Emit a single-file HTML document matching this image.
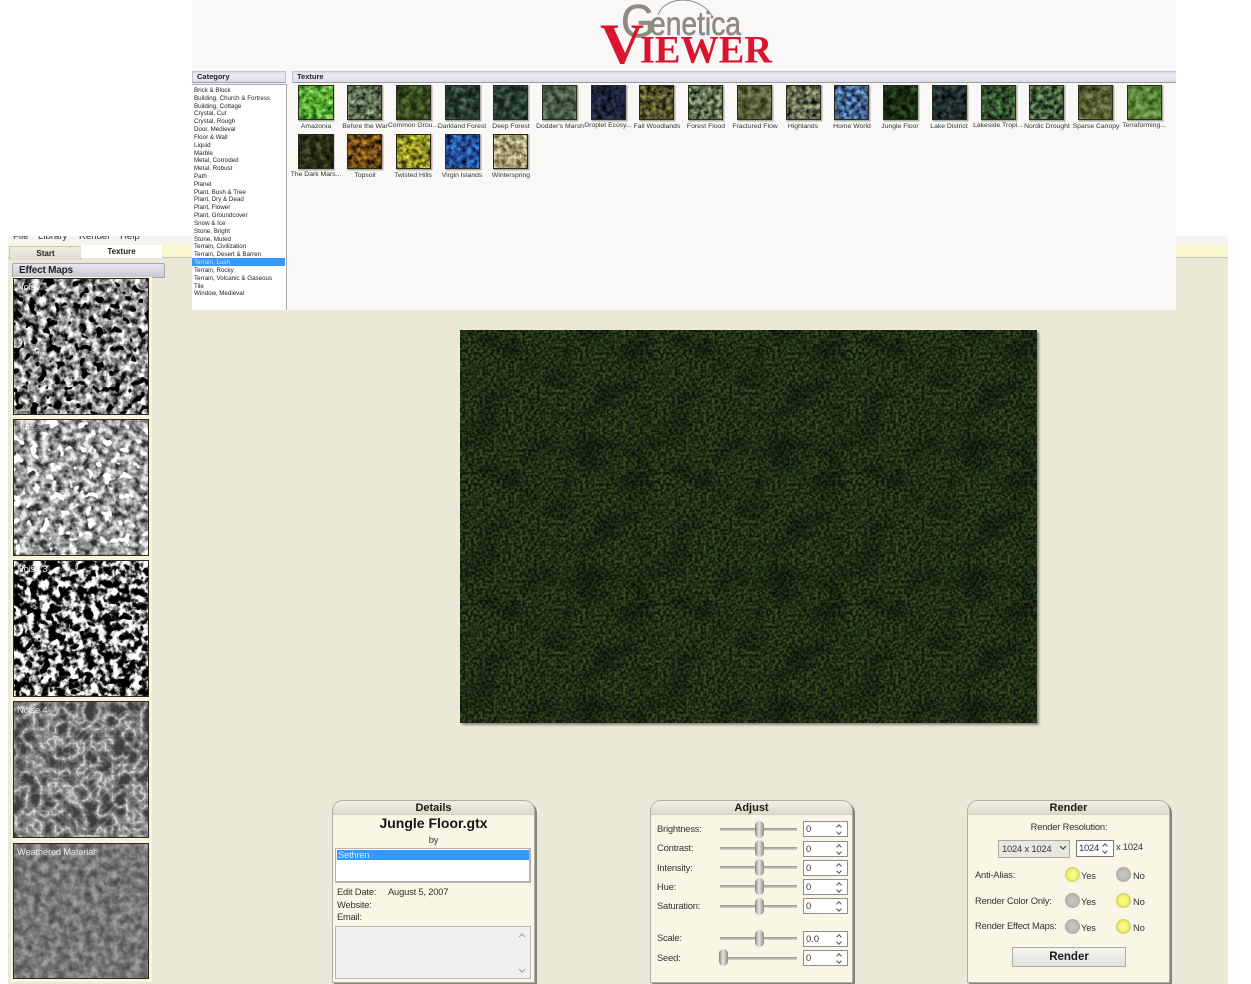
<!DOCTYPE html>
<html><head><meta charset="utf-8"><title>Genetica Viewer</title>
<style>
html,body{margin:0;padding:0;background:#fff}
body{position:relative;width:1251px;height:984px;overflow:hidden;font-family:"Liberation Sans",sans-serif;color:#222}
.a{position:absolute}
.t{position:absolute;white-space:nowrap}
.c{position:absolute;white-space:nowrap;text-align:center}
.cat{position:absolute;left:194px;font-size:6.8px;line-height:8px;height:8px;white-space:nowrap;color:#222;transform:scaleX(.915);transform-origin:0 0}
.lab{position:absolute;font-size:6.8px;line-height:8px;width:60px;text-align:center;white-space:nowrap;color:#333}
.hd{position:absolute;height:10px;background:linear-gradient(#d8d8e6,#eeeef4 30%,#dcdce8);border:1px solid #c4c4d0;border-bottom-color:#9c9ca6;font:bold 7.5px/10px "Liberation Sans",sans-serif;color:#222;padding-left:4px;box-sizing:content-box}
.panel{position:absolute;top:800px;width:201px;height:181px;background:#f9f6e5;border:1px solid #b0aea4;border-radius:11px 11px 0 0;box-shadow:2px 2px 0 #85847c}
.phd{position:absolute;left:0;right:0;top:0;height:13px;border-radius:10px 10px 0 0;background:linear-gradient(#f2f0e4,#dcd9c8);border-bottom:1px solid #d5d2c0;text-align:center;font:bold 11px/14px "Liberation Sans",sans-serif;color:#1a1a1a}
.s{position:absolute;font-size:9.4px;letter-spacing:-.2px;line-height:12px;white-space:nowrap;color:#333}
.track{position:absolute;left:720px;width:77px;height:3px;background:linear-gradient(#98968a,#d8d6c8)}
.thumb{position:absolute;width:9px;height:17px;border-radius:5px;background:linear-gradient(90deg,#858580,#e6e6e6 45%,#8a8a86)}
.spin{position:absolute;left:803px;width:43px;height:14px;background:#fff;border:1px solid #8f8f8f;font-size:9.4px;line-height:14px;color:#333;text-indent:2px}
.spin:after,.spin2:after{content:"";position:absolute;right:6px;top:3px;width:3px;height:3px;border-left:1px solid #555;border-top:1px solid #555;transform:rotate(45deg)}
.spin:before,.spin2:before{content:"";position:absolute;right:6px;top:8px;width:3px;height:3px;border-right:1px solid #555;border-bottom:1px solid #555;transform:rotate(45deg)}
.led{position:absolute;width:15px;height:15px;border-radius:50%;background:radial-gradient(circle at 50% 50%,#c9c9c4 0,#bcbcb6 50%,#8e8e86 100%)}
.on{background:radial-gradient(circle at 50% 50%,#fbfb90 0,#f3f370 45%,#9c9c58 100%)}
.noise{position:absolute;left:13px;width:136px;height:137px;outline:1px solid #2c2c20;outline-offset:-1px}
.nl{position:absolute;left:17px;font-size:9.4px;letter-spacing:-.2px;line-height:12px;color:#e8e8e8;white-space:nowrap}
svg{display:block}
</style></head><body>

<svg width="0" height="0" style="position:absolute">
<defs>
<filter id="n1" x="0" y="0" width="1" height="1" color-interpolation-filters="sRGB"><feTurbulence type="fractalNoise" baseFrequency=".15" numOctaves="4" seed="4"/><feColorMatrix values="2.4 0 0 0 -.7 2.4 0 0 0 -.7 2.4 0 0 0 -.7 0 0 0 0 1"/><feComponentTransfer result="a"><feFuncR type="table" tableValues=".1 .38 .58 .8 1"/><feFuncG type="table" tableValues=".1 .38 .58 .8 1"/><feFuncB type="table" tableValues=".1 .38 .58 .8 1"/></feComponentTransfer><feTurbulence type="fractalNoise" baseFrequency=".12" numOctaves="2" seed="12"/><feColorMatrix values="14 0 0 0 -4.8 14 0 0 0 -4.8 14 0 0 0 -4.8 0 0 0 0 1"/><feBlend in2="a" mode="multiply"/></filter>
<filter id="n2" x="0" y="0" width="1" height="1" color-interpolation-filters="sRGB"><feTurbulence type="fractalNoise" baseFrequency=".14" numOctaves="4" seed="6"/><feColorMatrix values="2.4 0 0 0 -.7 2.4 0 0 0 -.7 2.4 0 0 0 -.7 0 0 0 0 1"/><feComponentTransfer result="a"><feFuncR type="table" tableValues=".18 .42 .58 .74 .92"/><feFuncG type="table" tableValues=".18 .42 .58 .74 .92"/><feFuncB type="table" tableValues=".18 .42 .58 .74 .92"/></feComponentTransfer><feTurbulence type="fractalNoise" baseFrequency=".11" numOctaves="2" seed="12"/><feColorMatrix values="-14 0 0 0 5.6 -14 0 0 0 5.6 -14 0 0 0 5.6 0 0 0 0 1"/><feBlend in2="a" mode="screen"/></filter>
<filter id="n3" x="0" y="0" width="1" height="1" color-interpolation-filters="sRGB"><feTurbulence type="fractalNoise" baseFrequency=".14" numOctaves="4" seed="4"/><feColorMatrix values="3.4 0 0 0 -1.2 3.4 0 0 0 -1.2 3.4 0 0 0 -1.2 0 0 0 0 1"/><feComponentTransfer result="a"><feFuncR type="table" tableValues="0 .2 .55 .9 1"/><feFuncG type="table" tableValues="0 .2 .55 .9 1"/><feFuncB type="table" tableValues="0 .2 .55 .9 1"/></feComponentTransfer><feTurbulence type="fractalNoise" baseFrequency=".11" numOctaves="2" seed="12"/><feColorMatrix values="14 0 0 0 -5 14 0 0 0 -5 14 0 0 0 -5 0 0 0 0 1"/><feBlend in2="a" mode="multiply"/></filter>
<filter id="n4" x="0" y="0" width="1" height="1" color-interpolation-filters="sRGB"><feTurbulence type="turbulence" baseFrequency=".07" numOctaves="5" seed="7"/><feColorMatrix values="-2 0 0 0 1.05 -2 0 0 0 1.05 -2 0 0 0 1.05 0 0 0 0 1"/><feComponentTransfer><feFuncR type="table" tableValues=".25 .42 .6 .95"/><feFuncG type="table" tableValues=".25 .42 .6 .95"/><feFuncB type="table" tableValues=".25 .42 .6 .95"/></feComponentTransfer></filter>
<filter id="n5" x="0" y="0" width="1" height="1" color-interpolation-filters="sRGB"><feTurbulence type="fractalNoise" baseFrequency=".14" numOctaves="3" seed="4"/><feColorMatrix values="1.8 0 0 0 -.4 1.8 0 0 0 -.4 1.8 0 0 0 -.4 0 0 0 0 1"/><feComponentTransfer result="a"><feFuncR type="table" tableValues=".36 .44 .54 .64"/><feFuncG type="table" tableValues=".36 .44 .54 .64"/><feFuncB type="table" tableValues=".36 .44 .54 .64"/></feComponentTransfer><feTurbulence type="fractalNoise" baseFrequency=".11" numOctaves="2" seed="12"/><feColorMatrix values="5 0 0 0 -1.5 5 0 0 0 -1.5 5 0 0 0 -1.5 0 0 0 0 1"/><feComponentTransfer result="b"><feFuncR type="table" tableValues=".8 1"/><feFuncG type="table" tableValues=".8 1"/><feFuncB type="table" tableValues=".8 1"/></feComponentTransfer><feBlend in="b" in2="a" mode="multiply"/></filter>
<filter id="main" x="0" y="0" width="1" height="1" color-interpolation-filters="sRGB"><feTurbulence type="fractalNoise" baseFrequency=".35" numOctaves="3" seed="9" stitchTiles="stitch"/><feColorMatrix values="3 0 0 0 -1 3 0 0 0 -1 3 0 0 0 -1 0 0 0 0 1"/><feComponentTransfer result="a"><feFuncR type="table" tableValues=".06 .09 .125 .16 .22"/><feFuncG type="table" tableValues=".09 .14 .19 .24 .31"/><feFuncB type="table" tableValues=".04 .07 .09 .11 .14"/></feComponentTransfer><feTurbulence type="fractalNoise" baseFrequency=".026 .038" numOctaves="3" seed="3" stitchTiles="stitch"/><feColorMatrix values="1 0 0 0 .45 1 0 0 0 .45 1 0 0 0 .45 0 0 0 0 1"/><feBlend in2="a" mode="multiply"/></filter>
<filter id="g1" x="0" y="0" width="1" height="1" color-interpolation-filters="sRGB"><feTurbulence type="fractalNoise" baseFrequency=".16" numOctaves="3" seed="5"/><feColorMatrix values="1.4 0 0 0 -.2 1.4 0 0 0 -.2 1.4 0 0 0 -.2 0 0 0 0 1"/><feBlend in2="SourceGraphic" mode="soft-light"/></filter>
<filter id="g2" x="0" y="0" width="1" height="1" color-interpolation-filters="sRGB"><feTurbulence type="fractalNoise" baseFrequency=".2" numOctaves="3" seed="8"/><feColorMatrix values="1.5 0 0 0 -.25 1.5 0 0 0 -.25 1.5 0 0 0 -.25 0 0 0 0 1"/><feBlend in2="SourceGraphic" mode="overlay"/></filter>
</defs>
</svg>

<div class="a" style="left:8px;top:236px;width:1220px;height:8px;background:#f4f5f3;overflow:hidden">
<span class="t" style="left:5px;top:-5px;font-size:9.6px;line-height:12px;color:#333">File</span>
<span class="t" style="left:30px;top:-5px;font-size:9.6px;line-height:12px;color:#333">Library</span>
<span class="t" style="left:71px;top:-5px;font-size:9.6px;line-height:12px;color:#333">Render</span>
<span class="t" style="left:112px;top:-5px;font-size:9.6px;line-height:12px;color:#333">Help</span>
</div>
<div class="a" style="left:8px;top:244px;width:1220px;height:13px;background:#f9f8cf"></div>
<div class="a" style="left:8px;top:257px;width:1220px;height:727px;background:#ebe8d8;border-top:1px solid #c9c8ac;box-sizing:border-box"></div>
<div class="a" style="left:9px;top:246px;width:71px;height:13px;background:linear-gradient(#f0eee6,#dedcd0);border:1px solid #c8c6ba;border-bottom:0;font:bold 8px/14px 'Liberation Sans',sans-serif;text-align:center;color:#222">Start</div>
<div class="a" style="left:81px;top:245px;width:81px;height:13px;background:#fff;font:bold 8px/13px 'Liberation Sans',sans-serif;text-align:center;color:#222">Texture</div>
<div class="a" style="left:12px;top:263px;width:151px;height:13px;background:linear-gradient(#e6e6ee,#c8c8d4);border:1px solid #a6a6ae;border-radius:2px 2px 0 0;font:bold 10px/13px 'Liberation Sans',sans-serif;text-indent:6px;letter-spacing:-.2px;color:#222">Effect Maps</div>

<div class="a" style="left:11px;top:277px;width:141px;height:705px;background:#f8f5dd"></div>
<svg class="noise" style="top:278px" width="136" height="137"><rect width="136" height="137" filter="url(#n1)"/></svg>
<svg class="noise" style="top:419px" width="136" height="137"><rect width="136" height="137" filter="url(#n2)"/></svg>
<svg class="noise" style="top:560px" width="136" height="137"><rect width="136" height="137" filter="url(#n3)"/></svg>
<svg class="noise" style="top:701px" width="136" height="137"><rect width="136" height="137" filter="url(#n4)"/></svg>
<svg class="noise" style="top:843px;height:136px" width="136" height="136"><rect width="136" height="136" filter="url(#n5)"/></svg>
<div class="nl" style="top:281px">Noise</div>
<div class="nl" style="top:422px;color:#999">Noise 2</div>
<div class="nl" style="top:563px">Noise 3</div>
<div class="nl" style="top:704px">Noise 4</div>
<div class="nl" style="top:846px">Weathered Material</div>

<svg class="a" style="left:460px;top:330px;box-shadow:2px 2px 2px #8a897c" width="577" height="393">
<defs><rect id="tile" width="192.4" height="131" filter="url(#main)"/></defs>
<use href="#tile" x="0" y="0"/><use href="#tile" x="192.3" y="0"/><use href="#tile" x="384.6" y="0"/>
<use href="#tile" x="0" y="131"/><use href="#tile" x="192.3" y="131"/><use href="#tile" x="384.6" y="131"/>
<use href="#tile" x="0" y="262"/><use href="#tile" x="192.3" y="262"/><use href="#tile" x="384.6" y="262"/>
</svg>

<div class="a" style="left:192px;top:0;width:984px;height:310px;background:#faf8f6"></div>
<svg class="a" style="left:590px;top:0" width="195" height="70">
<path d="M68 15C75 -5 110 -5 122 16" fill="none" stroke="#8d8a84" stroke-width="1"/>
<circle cx="122" cy="17" r="1.5" fill="#8d8a84"/>
<text x="31" y="37" font-family="Liberation Sans" font-size="46" fill="#8d8a84" stroke="#8d8a84" stroke-width=".5" textLength="34" lengthAdjust="spacingAndGlyphs">G</text>
<text x="60" y="35" font-family="Liberation Sans" font-size="33" fill="#8d8a84" stroke="#8d8a84" stroke-width=".6" textLength="91" lengthAdjust="spacingAndGlyphs">enetica</text>
<text x="10" y="63" font-family="Liberation Serif" font-weight="bold" font-size="57" fill="#d8142e" textLength="44" lengthAdjust="spacingAndGlyphs">V</text>
<text x="50" y="62.500" font-family="Liberation Serif" font-weight="bold" font-size="39" fill="#d8142e" textLength="132" lengthAdjust="spacingAndGlyphs">IEWER</text>
</svg>

<div class="hd" style="left:192px;top:71px;width:88px">Category</div>
<div class="hd" style="left:292px;top:71px;width:879px;border-right:0">Texture</div>

<div class="a" style="left:192px;top:84px;width:95px;height:226px;background:#fff;border-top:1px solid #aaa;border-right:1px solid #aaa;box-sizing:border-box"></div>
<div class="a" style="left:192px;top:258px;width:93px;height:8px;background:#3399ff"></div>
<div class="cat" style="top:87px">Brick &amp; Block</div>
<div class="cat" style="top:95px">Building, Church &amp; Fortress</div>
<div class="cat" style="top:102.6px">Building, Cottage</div>
<div class="cat" style="top:110.4px">Crystal, Cut</div>
<div class="cat" style="top:118.2px">Crystal, Rough</div>
<div class="cat" style="top:126px">Door, Medieval</div>
<div class="cat" style="top:133.8px">Floor &amp; Wall</div>
<div class="cat" style="top:141.7px">Liquid</div>
<div class="cat" style="top:149.5px">Marble</div>
<div class="cat" style="top:157.3px">Metal, Corroded</div>
<div class="cat" style="top:165.1px">Metal, Robust</div>
<div class="cat" style="top:173px">Path</div>
<div class="cat" style="top:180.8px">Planet</div>
<div class="cat" style="top:188.6px">Plant, Bush &amp; Tree</div>
<div class="cat" style="top:196.4px">Plant, Dry &amp; Dead</div>
<div class="cat" style="top:204.2px">Plant, Flower</div>
<div class="cat" style="top:212px">Plant, Groundcover</div>
<div class="cat" style="top:220px">Snow &amp; Ice</div>
<div class="cat" style="top:227.8px">Stone, Bright</div>
<div class="cat" style="top:235.6px">Stone, Muted</div>
<div class="cat" style="top:243.4px">Terrain, Civilization</div>
<div class="cat" style="top:251.2px">Terrain, Desert &amp; Barren</div>
<div class="cat" style="top:259px;color:#cfe6ff">Terrain, Lush</div>
<div class="cat" style="top:266.9px">Terrain, Rocky</div>
<div class="cat" style="top:274.7px">Terrain, Volcanic &amp; Gaseous</div>
<div class="cat" style="top:282.5px">Tile</div>
<div class="cat" style="top:290.3px">Window, Medieval</div>

<svg class="a" style="left:292px;top:80px" width="884" height="100">
<path d="M7 6h35v35h-35zM56 6h35v35h-35zM105 6h35v35h-35zM154 6h35v35h-35zM202 6h35v35h-35zM251 6h35v35h-35zM300 6h35v35h-35zM348 6h35v35h-35zM397 6h35v35h-35zM446 6h35v35h-35zM495 6h35v35h-35zM543 6h35v35h-35zM592 6h35v35h-35zM641 6h35v35h-35zM690 6h35v35h-35zM738 6h35v35h-35zM787 6h35v35h-35zM836 6h35v35h-35zM7 55h35v35h-35zM56 55h35v35h-35zM105 55h35v35h-35zM154 55h35v35h-35zM202 55h35v35h-35z" fill="#b0aea6" stroke="#b0aea6"/>
<rect x="6" y="5" width="36" height="35" fill="#5aa838" filter="url(#g2)"/>
<rect x="55" y="5" width="35" height="35" fill="#5a6a50" filter="url(#g2)"/>
<rect x="104" y="5" width="35" height="35" fill="#32481a" filter="url(#g1)"/>
<rect x="153" y="5" width="35" height="35" fill="#24382e" filter="url(#g1)"/>
<rect x="201" y="5" width="35" height="35" fill="#24382e" filter="url(#g1)"/>
<rect x="250" y="5" width="35" height="35" fill="#465a42" filter="url(#g1)"/>
<rect x="299" y="5" width="35" height="35" fill="#1c2238" filter="url(#g2)"/>
<rect x="347" y="5" width="35" height="35" fill="#52502a" filter="url(#g2)"/>
<rect x="396" y="5" width="35" height="35" fill="#5e6e52" filter="url(#g2)"/>
<rect x="445" y="5" width="35" height="35" fill="#565c36" filter="url(#g1)"/>
<rect x="494" y="5" width="35" height="35" fill="#60684e" filter="url(#g2)"/>
<rect x="542" y="5" width="35" height="35" fill="#40608a" filter="url(#g2)"/>
<rect x="591" y="5" width="35" height="35" fill="#14280f" filter="url(#g1)"/>
<rect x="640" y="5" width="35" height="35" fill="#1e2c2c" filter="url(#g2)"/>
<rect x="689" y="5" width="35" height="35" fill="#32502e" filter="url(#g2)"/>
<rect x="737" y="5" width="35" height="35" fill="#405a3a" filter="url(#g2)"/>
<rect x="786" y="5" width="35" height="35" fill="#585e30" filter="url(#g1)"/>
<rect x="835" y="5" width="35" height="35" fill="#5c8838" filter="url(#g1)"/>
<rect x="6" y="54" width="36" height="35" fill="#262c16" filter="url(#g1)"/>
<rect x="55" y="54" width="35" height="35" fill="#6e4a14" filter="url(#g2)"/>
<rect x="104" y="54" width="35" height="35" fill="#8c8c22" filter="url(#g2)"/>
<rect x="153" y="54" width="35" height="35" fill="#24509a" filter="url(#g2)"/>
<rect x="201" y="54" width="35" height="35" fill="#a09a6e" filter="url(#g2)"/>
<path d="M6.500 5.500h35v34h-35zM55.500 5.500h34v34h-34zM104.500 5.500h34v34h-34zM153.500 5.500h34v34h-34zM201.500 5.500h34v34h-34zM250.500 5.500h34v34h-34zM299.500 5.500h34v34h-34zM347.500 5.500h34v34h-34zM396.500 5.500h34v34h-34zM445.500 5.500h34v34h-34zM494.500 5.500h34v34h-34zM542.500 5.500h34v34h-34zM591.500 5.500h34v34h-34zM640.500 5.500h34v34h-34zM689.500 5.500h34v34h-34zM737.500 5.500h34v34h-34zM786.500 5.500h34v34h-34zM835.500 5.500h34v34h-34zM6.500 54.500h35v34h-35zM55.500 54.500h34v34h-34zM104.500 54.500h34v34h-34zM153.500 54.500h34v34h-34zM201.500 54.500h34v34h-34z" fill="none" stroke="#2a2a1c" stroke-width="1"/>
</svg>
<div class="lab" style="left:286px;top:123px">Amazonia</div>
<div class="lab" style="left:335px;top:123px">Before the War</div>
<div class="lab" style="left:383px;top:122px">Common Grou...</div>
<div class="lab" style="left:432px;top:123px">Darkland Forest</div>
<div class="lab" style="left:481px;top:123px">Deep Forest</div>
<div class="lab" style="left:530px;top:123px">Dodder's Marsh</div>
<div class="lab" style="left:578px;top:122px">Droplet Ecosy...</div>
<div class="lab" style="left:627px;top:123px">Fall Woodlands</div>
<div class="lab" style="left:676px;top:123px">Forest Flood</div>
<div class="lab" style="left:725px;top:123px">Fractured Flow</div>
<div class="lab" style="left:773px;top:123px">Highlands</div>
<div class="lab" style="left:822px;top:123px">Home World</div>
<div class="lab" style="left:870px;top:123px">Jungle Floor</div>
<div class="lab" style="left:919px;top:123px">Lake District</div>
<div class="lab" style="left:968px;top:122px">Lakeside Tropi...</div>
<div class="lab" style="left:1017px;top:123px">Nordic Drought</div>
<div class="lab" style="left:1066px;top:123px">Sparse Canopy</div>
<div class="lab" style="left:1114px;top:122px">Terraforming...</div>
<div class="lab" style="left:286px;top:171px">The Dark Mars...</div>
<div class="lab" style="left:335px;top:172px">Topsoil</div>
<div class="lab" style="left:383px;top:172px">Twisted Hills</div>
<div class="lab" style="left:432px;top:172px">Virgin Islands</div>
<div class="lab" style="left:481px;top:172px">Winterspring</div>

<div class="panel" style="left:332px"><div class="phd">Details</div></div>
<div class="c" style="left:332px;width:203px;top:815px;font:bold 14px/17px 'Liberation Sans',sans-serif;color:#151515">Jungle Floor.gtx</div>
<div class="c s" style="left:332px;width:203px;top:834px">by</div>
<div class="a" style="left:335px;top:848px;width:193px;height:32px;background:#fff;border:2px solid #b4b4b4;border-width:1px 2px 2px 1px"></div>
<div class="a" style="left:337px;top:850px;width:192px;height:10px;background:#3399ff"></div>
<div class="s" style="left:338px;top:849px;color:#d6eaff">Sethren</div>
<div class="s" style="left:337px;top:886px">Edit Date:</div>
<div class="s" style="left:388px;top:886px">August 5, 2007</div>
<div class="s" style="left:337px;top:899px">Website:</div>
<div class="s" style="left:337px;top:911px">Email:</div>
<div class="a" style="left:335px;top:926px;width:194px;height:51px;background:#efefef;border:1px solid #b8b8b8"></div>
<svg class="a" style="left:517px;top:932px" width="10" height="42"><path d="M2 5L5 2L8 5M2 37L5 40L8 37" fill="none" stroke="#a8a8a8" stroke-width="1.2"/></svg>

<div class="panel" style="left:650px"><div class="phd">Adjust</div></div>
<div class="s" style="left:657px;top:823px">Brightness:</div>
<div class="s" style="left:657px;top:842px">Contrast:</div>
<div class="s" style="left:657px;top:862px">Intensity:</div>
<div class="s" style="left:657px;top:881px">Hue:</div>
<div class="s" style="left:657px;top:900px">Saturation:</div>
<div class="s" style="left:657px;top:932px">Scale:</div>
<div class="s" style="left:657px;top:952px">Seed:</div>
<div class="track" style="top:828px"></div><div class="thumb" style="left:755px;top:821px"></div>
<div class="track" style="top:847px"></div><div class="thumb" style="left:755px;top:840px"></div>
<div class="track" style="top:866px"></div><div class="thumb" style="left:755px;top:859px"></div>
<div class="track" style="top:885px"></div><div class="thumb" style="left:755px;top:878px"></div>
<div class="track" style="top:905px"></div><div class="thumb" style="left:755px;top:898px"></div>
<div class="track" style="top:937px"></div><div class="thumb" style="left:755px;top:930px"></div>
<div class="track" style="top:957px"></div><div class="thumb" style="left:719px;top:949px"></div>
<div class="spin" style="top:821px">0</div>
<div class="spin" style="top:841px">0</div>
<div class="spin" style="top:860px">0</div>
<div class="spin" style="top:879px">0</div>
<div class="spin" style="top:898px">0</div>
<div class="spin" style="top:931px">0.0</div>
<div class="spin" style="top:950px">0</div>

<div class="panel" style="left:967px"><div class="phd">Render</div></div>
<div class="c s" style="left:967px;width:204px;top:821px">Render Resolution:</div>
<div class="a" style="left:998px;top:840px;width:70px;height:16px;background:#e8e7e0;border:1px solid #a8a8a4;font-size:9.4px;letter-spacing:-.2px;line-height:16px;text-indent:3px;color:#333">1024 x 1024</div>
<svg class="a" style="left:1059px;top:845px" width="8" height="6"><path d="M1 1L4 4L7 1" fill="none" stroke="#444" stroke-width="1.2"/></svg>
<div class="spin2 a" style="left:1076px;top:840px;width:36px;height:15px;background:#fff;border:1px solid #777;font-size:9.4px;letter-spacing:-.2px;line-height:14px;text-indent:2px;color:#333">1024</div>
<div class="s" style="left:1116px;top:841px">x 1024</div>
<div class="s" style="left:975px;top:869px">Anti-Alias:</div>
<div class="s" style="left:975px;top:895px">Render Color Only:</div>
<div class="s" style="left:975px;top:920px">Render Effect Maps:</div>
<div class="led on" style="left:1065px;top:867px"></div><div class="s" style="left:1081px;top:870px">Yes</div>
<div class="led" style="left:1116px;top:867px"></div><div class="s" style="left:1133px;top:870px">No</div>
<div class="led" style="left:1065px;top:893px"></div><div class="s" style="left:1081px;top:896px">Yes</div>
<div class="led on" style="left:1116px;top:893px"></div><div class="s" style="left:1133px;top:896px">No</div>
<div class="led" style="left:1065px;top:919px"></div><div class="s" style="left:1081px;top:922px">Yes</div>
<div class="led on" style="left:1116px;top:919px"></div><div class="s" style="left:1133px;top:922px">No</div>
<div class="a" style="left:1012px;top:947px;width:112px;height:18px;background:linear-gradient(#f4f4f2,#e0e0dc);border:1px solid #aaa;font:bold 11.5px/19px 'Liberation Sans',sans-serif;text-align:center;color:#1a1a1a">Render</div>

</body></html>
